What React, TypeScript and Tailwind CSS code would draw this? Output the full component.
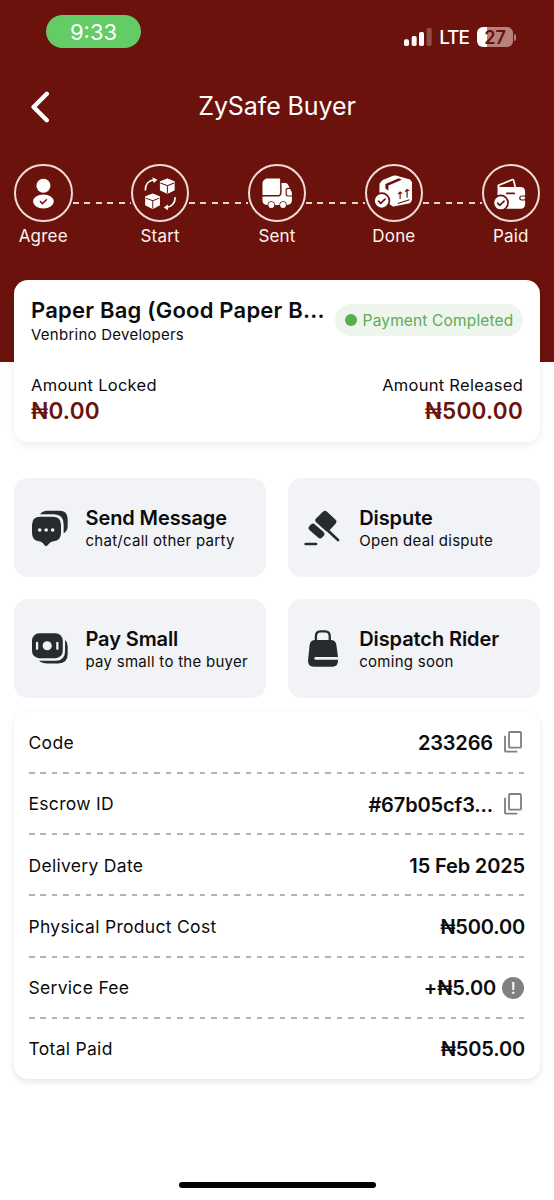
import type { ReactNode } from 'react';

const MAROON = '#6b120c';

function CheckBadge({ cx, cy, r }: { cx: number; cy: number; r: number }) {
  return (
    <g>
      <circle cx={cx} cy={cy} r={r} fill="#fff" stroke={MAROON} strokeWidth={5} />
      <path
        d={`M${cx - 9} ${cy + 1}l6 7 13-13`}
        fill="none"
        stroke={MAROON}
        strokeWidth={5}
        strokeLinecap="round"
        strokeLinejoin="round"
      />
    </g>
  );
}

function Cube({ x, y }: { x: number; y: number }) {
  return (
    <g transform={`translate(${x} ${y})`}>
      <path
        d="M22 1L42 9V34L22 44L1 34V9Z"
        fill="#fff"
        stroke="#fff"
        strokeWidth={3}
        strokeLinejoin="round"
      />
      <path d="M1 13L22 21L42 13M22 21V44" fill="none" stroke={MAROON} strokeWidth={3} />
    </g>
  );
}

const steps: { label: string; icon: ReactNode }[] = [
  {
    label: 'Agree',
    icon: (
      <>
        <circle cx="88" cy="65" r="21" fill="#fff" />
        <ellipse cx="88" cy="112" rx="31" ry="21" fill="#fff" />
        <path
          d="M79 112l6 7 12-12"
          fill="none"
          stroke={MAROON}
          strokeWidth={4.5}
          strokeLinecap="round"
          strokeLinejoin="round"
        />
      </>
    ),
  },
  {
    label: 'Start',
    icon: (
      <>
        <g fill="none" stroke="#fff" strokeWidth={5} strokeLinecap="round">
          <path d="M43 77C43 60 54 49 70 47" />
          <path d="M132 101C132 117 121 129 104 130" />
        </g>
        <path d="M64 40L79 47L68 57Z" fill="#fff" />
        <path d="M110 121L98 130L111 138Z" fill="#fff" />
        <Cube x={87} y={44} />
        <Cube x={43} y={89} />
      </>
    ),
  },
  {
    label: 'Sent',
    icon: (
      <g transform="translate(34.5 34.5) scale(4.4)" fill="#fff">
        <path d="M14 2.3V11.8C14 12.6 13.4 13.3 12.5 13.3H2V5.5C2 3.6 3.5 2 5.5 2H13.7Q14 2 14 2.3Z" />
        <path d="M22 14.2V17C22 18.7 20.7 20 19 20H18.5A2.5 2.5 0 0 0 13.5 20H10.5A2.5 2.5 0 0 0 5.5 20H5C3.3 20 2 18.7 2 17V14.2H12.8C14.1 14.2 15 13.1 15 11.8V5H17.4C18.2 5 18.9 5.4 19.2 6L20.5 8.3H19.3C18.3 8.3 17.7 9 17.7 10V12.7C17.7 13.6 18.3 14.2 19.3 14.2Z" />
        <circle cx="8" cy="20" r="2" />
        <circle cx="16" cy="20" r="2" />
        <path d="M22 12.3V13.5H19.5C18.9 13.5 18.5 13.1 18.5 12.6V10C18.5 9.5 18.9 9.1 19.5 9.1H20.8L21.7 10.8C21.9 11.2 22 11.7 22 12.3Z" />
      </g>
    ),
  },
  {
    label: 'Done',
    icon: (
      <g transform="translate(-33 -40)">
        <path
          d="M79 99L87 90L120 77L130 78L167 89L171 95V148L166 155L118 165L108 158L78 148Z"
          fill="#fff"
          stroke="#fff"
          strokeWidth={5}
          strokeLinejoin="round"
        />
        <path d="M94 100L134 83L143 87L103 104V119L94 113Z" fill={MAROON} />
        <path
          d="M138 145V125M132 130L138 124L144 128M159 140V117M153 123L159 116L165 120M131 158L166 147"
          fill="none"
          stroke={MAROON}
          strokeWidth={3.5}
        />
        <CheckBadge cx={83} cy={150} r={23} />
      </g>
    ),
  },
  {
    label: 'Paid',
    icon: (
      <g transform="translate(-383 -40)">
        <path
          d="M432 112V104L473 87Q477 86 478 90L483 112"
          fill="none"
          stroke="#fff"
          strokeWidth={5}
          strokeLinejoin="round"
        />
        <path
          d="M430 105Q431 109 438 109H498Q512 109 512 123V134H502Q494 135 494 142T502 149H512V160Q512 174 498 174H430Q428 174 428 171Z"
          fill="#fff"
        />
        <rect x="498" y="137" width="14" height="9" rx="4" fill="#fff" />
        <path d="M457 128H479" stroke={MAROON} strokeWidth={5} strokeLinecap="round" />
        <CheckBadge cx={439} cy={156} r={22} />
      </g>
    ),
  },
];

const actions: { title: string; subtitle: string; icon: ReactNode }[] = [
  {
    title: 'Send Message',
    subtitle: 'chat/call other party',
    icon: (
      <svg viewBox="0 0 108 108" className="ml-[2px] size-9" fill="#262b30">
        <path d="M24 13Q31 2 46 2H82Q107 2 107 27V48Q107 63 95 70V44Q95 13 65 13Z" />
        <path d="M25 20H62Q87 20 87 45V69Q87 91 65 94Q56 95 51 101L45 107Q42 109 39 107L33 100Q29 95 21 94Q0 91 0 68V45Q0 20 25 20Z" />
        <g fill="#f2f3f6">
          <circle cx="23" cy="60" r="5.5" />
          <circle cx="42.5" cy="60" r="5.5" />
          <circle cx="62" cy="60" r="5.5" />
        </g>
      </svg>
    ),
  },
  {
    title: 'Dispute',
    subtitle: 'Open deal dispute',
    icon: (
      <svg viewBox="0 0 108 108" className="size-9" fill="#262b30" stroke="#262b30">
        <path d="M63 12L88 35L70 55L43 31Z" strokeWidth={18} strokeLinejoin="round" />
        <path d="M27 50L23 54L48 76L52 72Z" strokeWidth={18} strokeLinejoin="round" />
        <path d="M70 60L102 90" strokeWidth={8} strokeLinecap="round" />
        <path d="M5 102H36" strokeWidth={8} strokeLinecap="round" />
      </svg>
    ),
  },
  {
    title: 'Pay Small',
    subtitle: 'pay small to the buyer',
    icon: (
      <svg viewBox="0 0 110 108" className="ml-[2px] size-9" fill="#262b30">
        <path d="M22 90H72Q101 90 101 61V26Q109 33 109 45V70Q109 98 80 98H48Q30 98 22 90Z" />
        <rect x="0" y="6" width="94" height="76" rx="22" />
        <g fill="#f2f3f6">
          <circle cx="46.5" cy="44" r="14" />
          <rect x="12" y="32" width="7" height="25" rx="3.5" />
          <rect x="74" y="32" width="7" height="25" rx="3.5" />
        </g>
      </svg>
    ),
  },
  {
    title: 'Dispatch Rider',
    subtitle: 'coming soon',
    icon: (
      <svg viewBox="0 0 91 112" className="ml-[4px] h-[37px] w-[30px]" fill="#262b30">
        <path
          d="M24 34V19Q24 4 38 4H52Q66 4 66 19V34"
          fill="none"
          stroke="#262b30"
          strokeWidth={7}
        />
        <path d="M22 30H69Q84 30 86 45L91 82H24Q19 82 19 86T24 90H91V94Q91 111 74 111H17Q0 111 0 94L5 45Q7 30 22 30Z" />
      </svg>
    ),
  },
];

function CopyIcon() {
  return (
    <svg viewBox="0 0 54 66" className="mr-[3px] mb-[2px] ml-[11px] h-[22px] w-[18px]" fill="none" stroke="#808080" strokeWidth={5.5}>
      <rect x="15" y="3" width="36" height="47" rx="3" />
      <path d="M3 14V59Q3 62 6 62H40" />
    </svg>
  );
}

const details: { label: string; value: string; icon?: ReactNode }[] = [
  { label: 'Code', value: '233266', icon: <CopyIcon /> },
  { label: 'Escrow ID', value: '#67b05cf3...', icon: <CopyIcon /> },
  { label: 'Delivery Date', value: '15 Feb 2025' },
  { label: 'Physical Product Cost', value: '₦500.00' },
  {
    label: 'Service Fee',
    value: '+₦5.00',
    icon: (
      <span className="mr-px ml-[6px] flex size-[22px] items-center justify-center rounded-full bg-[#808080] text-[16px] font-medium text-white">
        !
      </span>
    ),
  },
  { label: 'Total Paid', value: '₦505.00' },
];

function StatusBar() {
  return (
    <div className="flex h-[62px] justify-between pt-[15px] pr-[38px] pl-[46px]">
      <div className="flex h-[33px] w-[95px] items-center justify-center rounded-full bg-[#63cc66] pt-px text-[22px] text-white">
        9:33
      </div>
      <div className="flex h-[44px] items-center">
        <svg viewBox="0 0 84 54" className="h-[18px] w-[28px]" fill="#fff">
          <rect x="0" y="34" width="15" height="20" rx="5" />
          <rect x="23" y="24" width="15" height="30" rx="5" />
          <rect x="45" y="12" width="15" height="42" rx="5" />
          <rect x="68" y="0" width="15" height="54" rx="5" opacity="0.25" />
        </svg>
        <span className="ml-[7px] pt-px text-[19px] leading-none font-medium tracking-[-1px] text-white">LTE</span>
        <div className="ml-[8px] flex items-center">
          <div className="flex h-5 w-9 items-center justify-center rounded-[6px] bg-[linear-gradient(90deg,#fff_0_10px,#b8817d_10px)] pt-px text-[18px] leading-none font-semibold text-[#6b120c]">
            27
          </div>
          <div className="ml-px h-[7px] w-[2px] rounded-r-full bg-[#b8817d]" />
        </div>
      </div>
    </div>
  );
}

export default function App() {
  return (
    <div className="flex h-[1200px] w-[554px] flex-col overflow-hidden bg-white font-['Inter',sans-serif] text-[#0c0c0e]">
      {/* Header */}
      <header className="h-[362px] shrink-0 bg-[#6b120c]">
        <StatusBar />
        <div className="grid h-[88px] grid-cols-[80px_1fr_80px] items-center">
          <svg viewBox="0 0 18 32" className="mt-px ml-[31px] h-8 w-[18px]" fill="none" stroke="#fff" strokeWidth={4.4}>
            <path d="M15.8 2.8L2.6 16L15.8 29.2" strokeLinecap="round" strokeLinejoin="round" />
          </svg>
          <h1 className="pt-[2px] text-center text-[25px] tracking-[-0.1px] text-white">ZySafe Buyer</h1>
        </div>

        {/* Progress steps */}
        <div className="mx-[14px] mt-[13.5px] flex">
          {steps.map((step, index) => (
            <div key={step.label} className={index > 0 ? 'flex flex-1' : 'flex'}>
              {index > 0 && (
                <div className="mt-[38px] h-[2px] flex-1 bg-[repeating-linear-gradient(90deg,#e9d6d4_0_6px,transparent_6px_11.4px)]" />
              )}
              <div className="flex w-[58.5px] flex-col items-center">
                <div className="size-[58.5px] rounded-full border-2 border-[#eedcda]">
                  <svg viewBox="6 6 163 163" className="size-full">
                    {step.icon}
                  </svg>
                </div>
                <span className="mt-[3px] text-[17px] leading-[22px] tracking-[0.2px] text-[#fdf3f1]">
                  {step.label}
                </span>
              </div>
            </div>
          ))}
        </div>
      </header>

      {/* Deal summary */}
      <section className="mx-[14px] -mt-[82px] h-[162px] shrink-0 rounded-[14px] bg-white px-[17px] pt-[17px] shadow-[0_3px_8px_rgba(0,0,0,0.07)]">
        <div className="flex justify-between">
          <div>
            <h2 className="mb-px text-[22px] leading-[27px] font-semibold tracking-[0.22px] whitespace-nowrap">
              Paper Bag (Good Paper B...
            </h2>
            <p className="text-[15px] leading-5 tracking-[0.25px]">Venbrino Developers</p>
          </div>
          <div className="mt-[7px] flex h-8 w-[188px] items-center justify-center gap-[6px] rounded-full bg-[#edf5ec] text-[15.5px] tracking-[0.15px] whitespace-nowrap text-[#61ab58]">
            <span className="size-3 rounded-full bg-[#5cab50]" />
            <span className="pt-px">Payment Completed</span>
          </div>
        </div>
        <div className="mt-[29px] flex justify-between">
          <div>
            <p className="text-[16.5px] leading-[22px] tracking-[0.27px]">Amount Locked</p>
            <p className="text-[22.5px] leading-[30px] font-semibold tracking-[0.25px] text-[#6b120c]">₦0.00</p>
          </div>
          <div className="text-right">
            <p className="text-[16.5px] leading-[22px] tracking-[0.27px]">Amount Released</p>
            <p className="text-[22.5px] leading-[30px] font-semibold tracking-[0.25px] text-[#6b120c]">₦500.00</p>
          </div>
        </div>
      </section>

      {/* Actions */}
      <section className="mx-[14px] mt-9 grid grid-cols-2 gap-x-[21.5px] gap-y-[22px]">
        {actions.map((action) => (
          <button key={action.title} className="flex h-[99px] items-center rounded-[14px] bg-[#f2f3f6] pl-4 text-left">
            <span className="w-[55.5px] shrink-0">{action.icon}</span>
            <span className="flex flex-col pt-px whitespace-nowrap">
              <span className="text-[20px] leading-6 font-semibold tracking-[-0.1px]">{action.title}</span>
              <span className="text-[15px] leading-[21px] tracking-[0.27px]">{action.subtitle}</span>
            </span>
          </button>
        ))}
      </section>

      {/* Deal details */}
      <section className="mx-[14px] mt-[14px] h-[367px] shrink-0 rounded-[14px] bg-white pr-[15px] pl-[14.5px] shadow-[0_3px_7px_rgba(0,0,0,0.1)]">
        {details.map((row, index) => (
          <div key={row.label}>
            {index > 0 && (
              <div className="mr-px h-[2px] bg-[repeating-linear-gradient(90deg,#b3b3b3_0_5.5px,transparent_5.5px_11.4px)]" />
            )}
            <div className="flex h-[59.2px] items-center justify-between pt-[2px] first:h-[60px]">
              <span className="text-[17.5px] tracking-[0.3px]">{row.label}</span>
              <span className="flex items-center text-[20px] font-semibold tracking-[-0.14px]">
                {row.value}
                {row.icon}
              </span>
            </div>
          </div>
        ))}
      </section>

      {/* Home indicator */}
      <div className="mx-auto mt-auto mb-[12px] h-[6px] w-[197px] shrink-0 rounded-full bg-black" />
    </div>
  );
}
